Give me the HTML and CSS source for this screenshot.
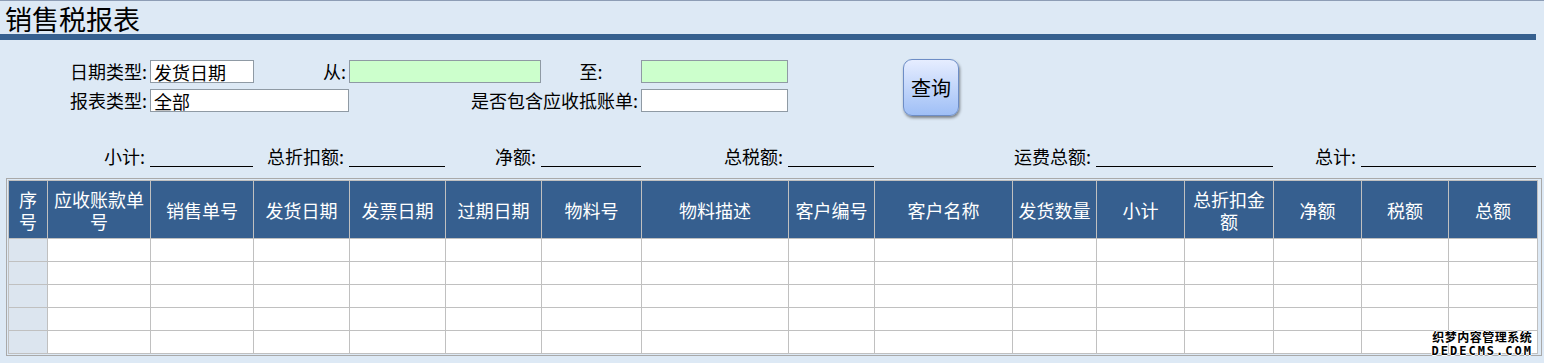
FILE: index.html
```html
<!DOCTYPE html>
<html lang="zh-CN">
<head>
  <meta charset="UTF-8" />
  <meta name="viewport" content="width=device-width, initial-scale=1.0">
  <title>销售税报表</title>
  <link rel="stylesheet" href="styles.css">
</head>
<body>
  <h1 class="title">销售税报表</h1>
  <div class="title-bar"></div>

  <form class="cols query-form">
    <label class="lbl col2 row1">日期类型:</label>
    <input class="txt col3 row1" type="text" value="发货日期" />
    <label class="lbl col4 row1">从:</label>
    <input class="txt date col5-6 row1" type="text" />
    <label class="lbl center col7 row1">至:</label>
    <input class="txt date col8 row1" type="text" />
    <button type="button" class="query-btn">查询</button>

    <label class="lbl col2 row2">报表类型:</label>
    <input class="txt col3-4 row2" type="text" value="全部" />
    <label class="lbl col5-7 row2">是否包含应收抵账单:</label>
    <input class="txt col8 row2" type="text" />
  </form>

  <div class="cols summary">
    <span class="lbl sum-lbl col2">小计:</span>
    <span class="sum-val col3"></span>
    <span class="lbl sum-lbl col4">总折扣额:</span>
    <span class="sum-val col5"></span>
    <span class="lbl sum-lbl col6">净额:</span>
    <span class="sum-val col7"></span>
    <span class="lbl sum-lbl col8">总税额:</span>
    <span class="sum-val col9"></span>
    <span class="lbl sum-lbl col11">运费总额:</span>
    <span class="sum-val col12-13"></span>
    <span class="lbl sum-lbl col14">总计:</span>
    <span class="sum-val col15-16"></span>
  </div>

  <div class="grid-box">
    <table class="report">
      <colgroup>
        <col style="width:39px"><col style="width:103px"><col style="width:103px"><col style="width:96px">
        <col style="width:96px"><col style="width:96px"><col style="width:100px"><col style="width:147px">
        <col style="width:86px"><col style="width:138px"><col style="width:84px"><col style="width:88px">
        <col style="width:89px"><col style="width:88px"><col style="width:87px"><col style="width:89px">
      </colgroup>
      <thead>
        <tr>
          <th>序号</th>
          <th>应收账款单号</th>
          <th>销售单号</th>
          <th>发货日期</th>
          <th>发票日期</th>
          <th>过期日期</th>
          <th>物料号</th>
          <th>物料描述</th>
          <th>客户编号</th>
          <th>客户名称</th>
          <th>发货数量</th>
          <th>小计</th>
          <th>总折扣金额</th>
          <th>净额</th>
          <th>税额</th>
          <th>总额</th>
        </tr>
      </thead>
      <tbody>
        <tr><td class="no"></td><td></td><td></td><td></td><td></td><td></td><td></td><td></td><td></td><td></td><td></td><td></td><td></td><td></td><td></td><td></td></tr>
        <tr><td class="no"></td><td></td><td></td><td></td><td></td><td></td><td></td><td></td><td></td><td></td><td></td><td></td><td></td><td></td><td></td><td></td></tr>
        <tr><td class="no"></td><td></td><td></td><td></td><td></td><td></td><td></td><td></td><td></td><td></td><td></td><td></td><td></td><td></td><td></td><td></td></tr>
        <tr><td class="no"></td><td></td><td></td><td></td><td></td><td></td><td></td><td></td><td></td><td></td><td></td><td></td><td></td><td></td><td></td><td></td></tr>
        <tr><td class="no"></td><td></td><td></td><td></td><td></td><td></td><td></td><td></td><td></td><td></td><td></td><td></td><td></td><td></td><td></td><td></td></tr>
      </tbody>
    </table>
  </div>

  <div class="watermark">
    <div class="wm-cn">织梦内容管理系统</div>
    <div class="wm-en">DEDECMS.COM</div>
  </div>
</body>
</html>
```

FILE: styles.css
```css
html, body { height: 100%; }
body {
  margin: 0;
  background-color: #dde9f5;
  border-top: 1px solid #8d9db5;
  font-family: "Noto Sans CJK SC", "Liberation Sans", sans-serif;
  font-size: 18px;
  color: #000;
  position: relative;
  overflow: hidden;
  box-sizing: border-box;
}
.title {
  margin: 0;
  padding-left: 5px;
  height: 33px;
  line-height: 36px;
  font-size: 27px;
  font-weight: normal;
}
.title-bar {
  height: 6px;
  width: 1536px;
  background-color: #36608f;
}

/* same column grid as the report table */
.cols {
  display: grid;
  grid-template-columns: 39px 103px 103px 96px 96px 96px 100px 147px 86px 138px 84px 88px 89px 88px 87px 88px;
  margin-left: 8px;
}
.query-form {
  margin-top: 20px;
  grid-template-rows: 23px 23px;
  row-gap: 6px;
}
.lbl {
  line-height: 23px;
  text-align: right;
  padding-right: 3px;
  white-space: nowrap;
}
.lbl.center { text-align: center; padding-right: 0; }
.txt {
  height: 23px;
  box-sizing: border-box;
  border: 1px solid #8f9aa4;
  background: #fff;
  font-family: inherit;
  font-size: 18px;
  padding: 0 3px;
  margin: 0;
  outline: none;
}
.txt.date { background-color: #ccffcc; }
input.col3 { width: 104px; }
input.col3-4 { width: 199px; }
input.col5-6 { width: 192px; }
input.col8 { width: 147px; }

.row1 { grid-row: 1; }
.row2 { grid-row: 2; }
.col2 { grid-column: 2; }
.col3 { grid-column: 3; }
.col4 { grid-column: 4; }
.col5 { grid-column: 5; }
.col6 { grid-column: 6; }
.col7 { grid-column: 7; }
.col8 { grid-column: 8; }
.col9 { grid-column: 9; }
.col11 { grid-column: 11; }
.col14 { grid-column: 14; }
.col3-4 { grid-column: 3 / 5; }
.col5-6 { grid-column: 5 / 7; }
.col5-7 { grid-column: 5 / 8; }
.col12-13 { grid-column: 12 / 14; }
.col15-16 { grid-column: 15 / 17; }

.query-btn {
  grid-column: 10;
  grid-row: 1 / 3;
  align-self: start;
  margin: -1px 0 0 29px;
  width: 56px;
  height: 57px;
  border: 1px solid #6d8dc6;
  border-radius: 9px;
  background: linear-gradient(#e6edff, #9fbff6);
  box-shadow: 1px 2px 3px rgba(0, 0, 0, 0.45);
  font-family: inherit;
  font-size: 20px;
  color: #000;
  padding: 0;
  cursor: pointer;
}

.summary {
  margin-top: 33px;
  height: 22px;
}
.sum-lbl { line-height: 22px; padding-right: 5px; }
.sum-val {
  border-bottom: 1px solid #000;
  height: 21px;
}

.grid-box {
  margin: 11px 0 0 6px;
  width: 1536px;
  box-sizing: border-box;
  border: 1px solid #a9a9a9;
  padding: 1px;
}
.report {
  table-layout: fixed;
  border-collapse: collapse;
  width: 1529px;
}
.report th, .report td {
  border: 1px solid #c0c0c0;
  padding: 0 4px;
}
.report th {
  background-color: #365f8f;
  color: #fff;
  font-weight: normal;
  height: 57px;
  line-height: 22px;
  text-align: center;
}
.report td {
  height: 22px;
  background-color: #fff;
}
.report td.no { background-color: #dce5ef; }

.watermark {
  position: absolute;
  right: 11px;
  bottom: 6px;
  font-family: "Noto Sans CJK SC", sans-serif;
  font-weight: bold;
  color: #000;
  text-align: center;
  text-shadow: 1px 0 0 #fff, -1px 0 0 #fff, 0 1px 0 #fff, 0 -1px 0 #fff;
}
.wm-cn { font-size: 12px; line-height: 16px; letter-spacing: 0.5px; }
.wm-en { font-size: 12px; line-height: 12px; letter-spacing: 2px; font-family: "DejaVu Sans Mono", monospace; }
```
